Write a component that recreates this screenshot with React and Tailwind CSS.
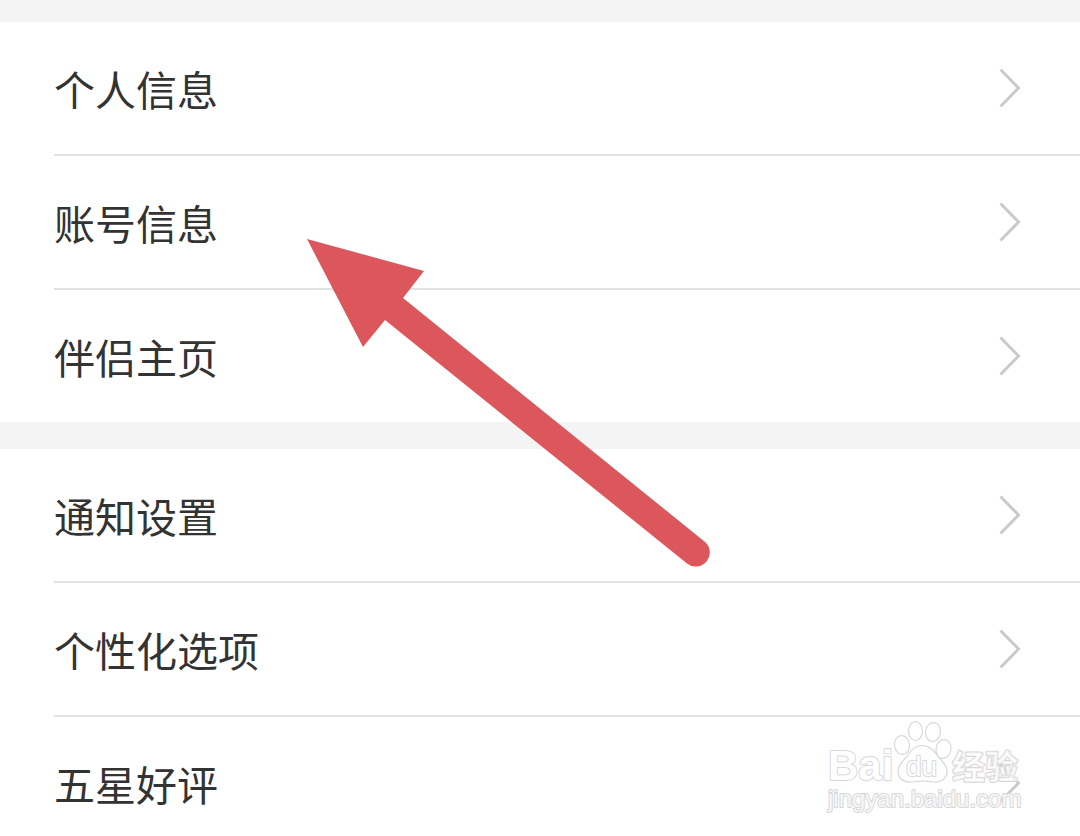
const groups = [
  [
    { href: '#profile', label: '个人信息' },
    { href: '#account', label: '账号信息' },
    { href: '#partner', label: '伴侣主页' },
  ],
  [
    { href: '#notifications', label: '通知设置' },
    { href: '#personalize', label: '个性化选项' },
    { href: '#rate', label: '五星好评' },
  ],
]

function Chevron() {
  return (
    <svg className="h-10 w-6 shrink-0" viewBox="0 0 24 40" fill="none" aria-hidden="true">
      <path d="M2.5 1.500 20.5 20 2.5 38.5" stroke="#cacaca" strokeWidth="3" />
    </svg>
  )
}

function SettingsGroup({ items }) {
  return (
    <ul className="bg-white pl-[54px]">
      {items.map((item) => (
        <li key={item.href} className="border-b-2 border-[#e2e2e2] last:border-b-0">
          <a href={item.href} className="flex h-[132px] items-center justify-between pr-[58px]">
            <span className="text-[41px] leading-[60px]">{item.label}</span>
            <Chevron />
          </a>
        </li>
      ))}
    </ul>
  )
}

function PointerArrow() {
  return (
    <svg
      className="pointer-events-none absolute left-[306px] top-[238px] h-[330px] w-[406px]"
      viewBox="306 238 406 330"
      aria-hidden="true"
    >
      <path
        d="M307 239 424 271 403 298 704.5 541.5A14 14 0 0 1 687 563.500L385 320 363 347Z"
        fill="#db575c"
      />
    </svg>
  )
}

function Watermark() {
  return (
    <svg
      className="pointer-events-none absolute left-[820px] top-[714px] h-[104px] w-[210px]"
      viewBox="820 714 210 104"
      fill="#fff"
      stroke="#d8d8d8"
      strokeWidth="1.2"
    >
      <g fillOpacity="0.8">
        <ellipse cx="902" cy="745" rx="7.500" ry="9.500" transform="rotate(-8 902 745)" />
        <ellipse cx="915.500" cy="731" rx="7" ry="9.500" />
        <ellipse cx="933" cy="732" rx="7.500" ry="9.500" transform="rotate(8 933 732)" />
        <ellipse cx="943.500" cy="749" rx="7.500" ry="9.500" transform="rotate(10 943.5 749)" />
        <path d="M922 745.500C930 745.500 934 751 937 755C941 761 947 764 947 771C947 779 941 782.500 934 782C928 781 918 781 911 782C903 782.500 898 778 898 771C898 764 904 761 908 755C911 750 915 745.500 922 745.500Z" />
      </g>
      <g strokeWidth="2" strokeLinejoin="round" paintOrder="stroke">
        <text x="828" y="780" className="font-['Liberation_Sans'] text-[42px] font-bold">
          Bai
        </text>
        <text x="906" y="776" className="font-['Liberation_Sans'] text-[28px]">
          du
        </text>
        <text x="952" y="779" className="font-['Noto_Sans_CJK_SC'] text-[33px] font-bold" fillOpacity="0.7">
          经验
        </text>
        <text x="828" y="807" className="font-['Liberation_Sans'] text-[24px]" fillOpacity="0.8">
          jingyan.baidu.com
        </text>
      </g>
    </svg>
  )
}

export default function App() {
  return (
    <main className="relative h-screen overflow-hidden bg-[#f4f4f4] pt-[22px] font-['Noto_Sans_CJK_SC',sans-serif] text-[#333]">
      <div className="flex flex-col gap-[27px]">
        {groups.map((items) => (
          <SettingsGroup key={items[0].href} items={items} />
        ))}
      </div>
      <PointerArrow />
      <Watermark />
    </main>
  )
}
